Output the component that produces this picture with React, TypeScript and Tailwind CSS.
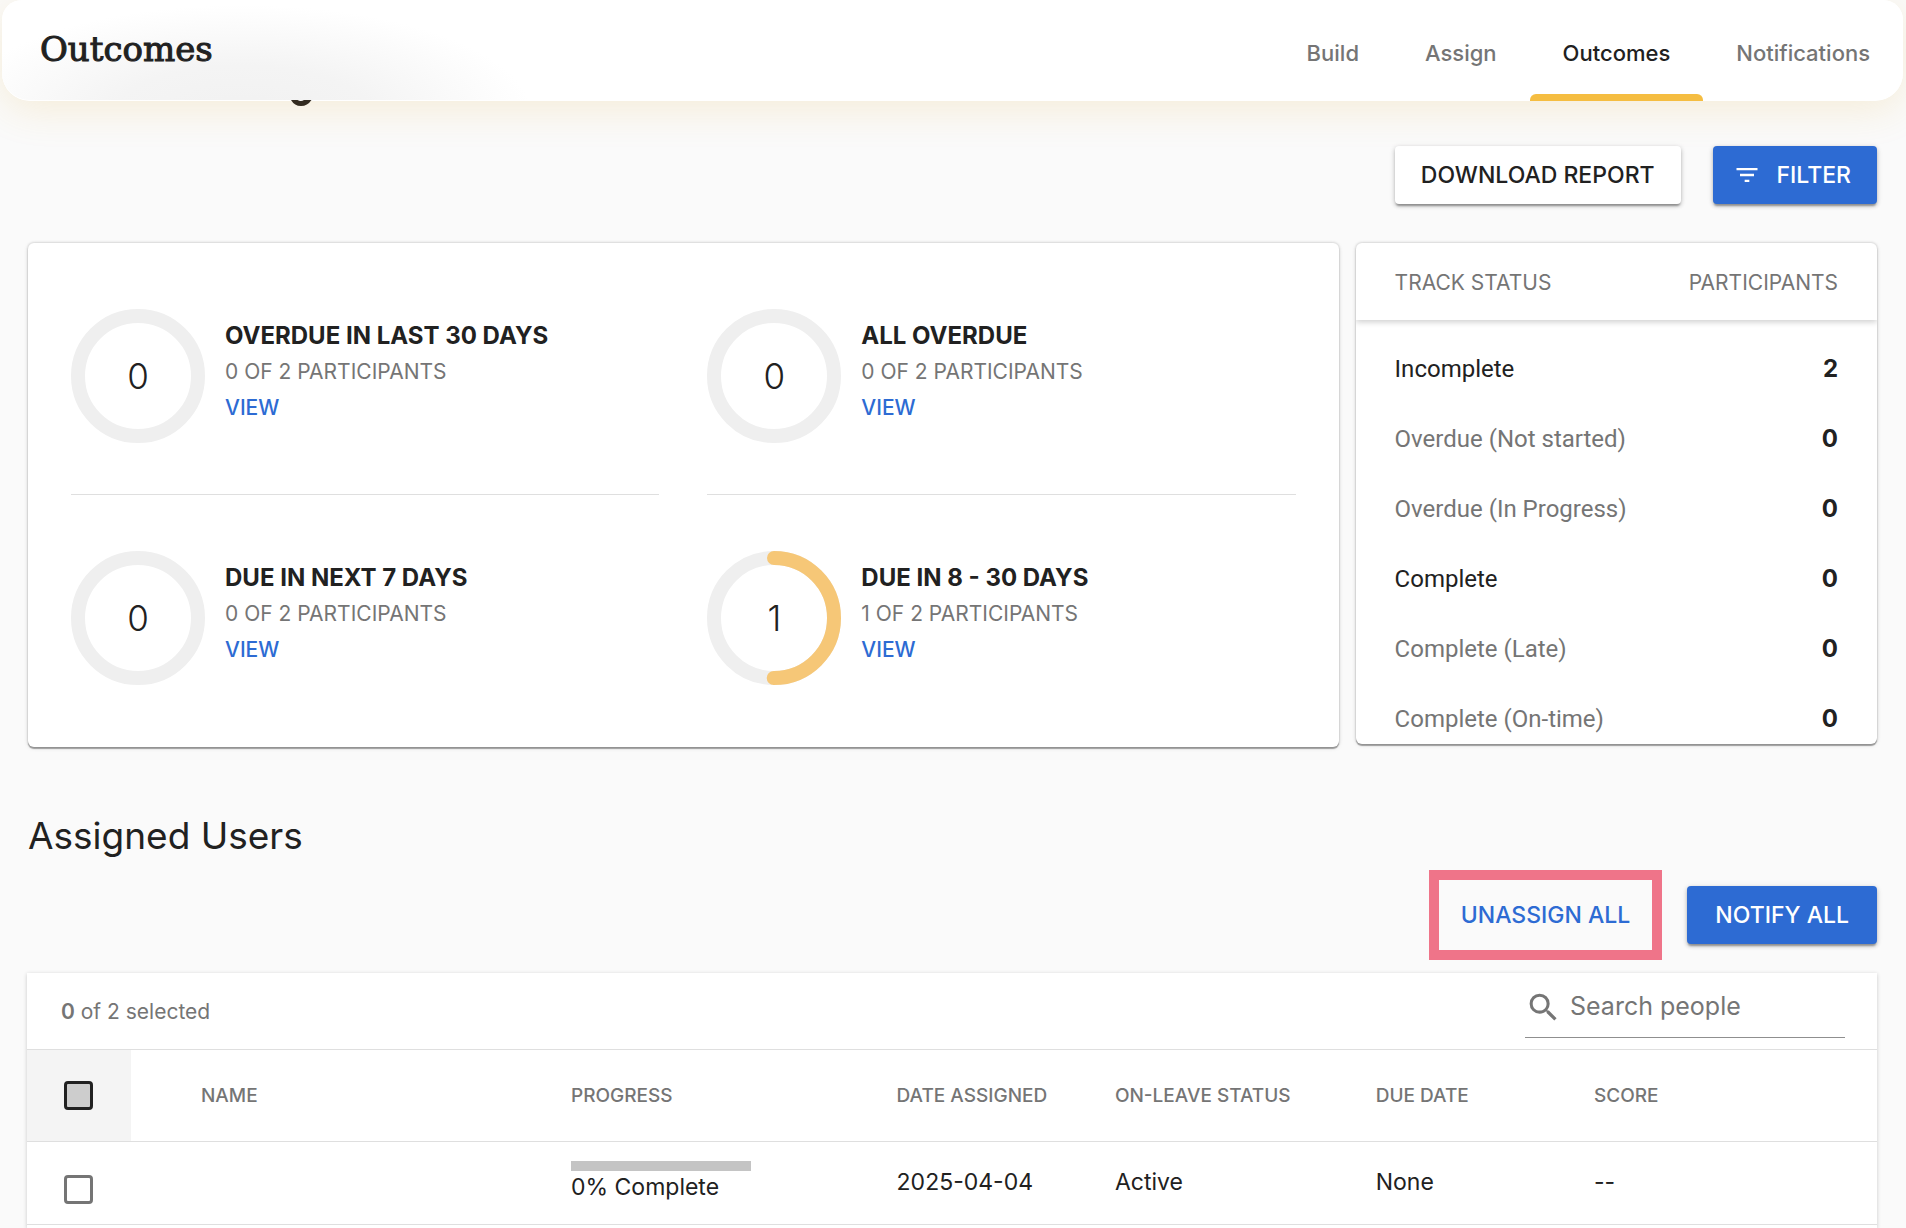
import { useState } from 'react'
import clsx from 'clsx'
import { MdFilterList, MdSearch } from 'react-icons/md'

const TABS = ['Build', 'Assign', 'Outcomes', 'Notifications']

const STATS = [
  { label: 'Overdue in last 30 days', count: 0 },
  { label: 'All overdue', count: 0 },
  { label: 'Due in next 7 days', count: 0 },
  { label: 'Due in 8 - 30 days', count: 1 },
]

const STATUSES = [
  { label: 'Incomplete', count: 2, main: true },
  { label: 'Overdue (Not started)', count: 0 },
  { label: 'Overdue (In Progress)', count: 0 },
  { label: 'Complete', count: 0, main: true },
  { label: 'Complete (Late)', count: 0 },
  { label: 'Complete (On-time)', count: 0 },
]

const COLUMNS = [
  { label: 'Name', width: 'w-[20%]' },
  { label: 'Progress', width: 'w-[17.6%]' },
  { label: 'Date assigned', width: 'w-[11.8%]' },
  { label: 'On-leave status', width: 'w-[14.1%]' },
  { label: 'Due date', width: 'w-[11.8%]' },
  { label: 'Score', width: '' },
]

const TOTAL = 2
const RADIUS = 60
const LENGTH = 2 * Math.PI * RADIUS

const cardClass = 'rounded-md bg-white shadow-[0_2px_1px_0_rgba(0,0,0,0.32),0_0_2px_1px_rgba(0,0,0,0.1),0_1px_5px_0_rgba(0,0,0,0.1)]'
const buttonShadow = 'shadow-[0_3px_2px_-1px_rgba(0,0,0,0.28),0_2px_4px_0_rgba(0,0,0,0.2),0_1px_6px_0_rgba(0,0,0,0.1)]'
const checkboxClass = 'block size-[29px] appearance-none rounded border-3'

function Ring({ count }: { count: number }) {
  return (
    <div className="relative size-[134px] shrink-0">
      <svg viewBox="0 0 134 134" className="size-full -rotate-90" fill="none" strokeWidth="14">
        <circle cx="67" cy="67" r={RADIUS} stroke="#efefef" />
        {count > 0 && (
          <circle
            cx="67"
            cy="67"
            r={RADIUS}
            stroke="#f6c777"
            strokeLinecap="round"
            strokeDasharray={`${(count / TOTAL) * LENGTH} ${LENGTH}`}
          />
        )}
      </svg>
      <span className="absolute inset-0 flex items-center justify-center text-[35px] font-light">{count}</span>
    </div>
  )
}

function Stat({ label, count, top }: { label: string; count: number; top: boolean }) {
  return (
    <div className={clsx('flex gap-5', top ? 'border-b border-[#dfdfdf] pt-[66px] pb-[51px]' : 'pt-14 pb-[62px]')}>
      <Ring count={count} />
      <div className="pt-[9px] text-[21px] leading-9 uppercase">
        <h3 className="text-2xl leading-9 font-bold">{label}</h3>
        <p className="text-[#757575]">{count} of {TOTAL} participants</p>
        <a href="#assigned" className="font-medium text-[#2d6bd3]">View</a>
      </div>
    </div>
  )
}

export default function App() {
  const [tab, setTab] = useState('Outcomes')

  return (
    <div className="flex min-h-screen flex-col bg-[#fafafa] font-['Inter',sans-serif] text-[#212121]">
      <header className="relative mr-[3px] ml-0.5 flex h-[101px] items-stretch justify-between rounded-[28px] rounded-t-[20px] border-b border-white bg-white bg-[radial-gradient(ellipse_290px_110px_at_240px_115px,#f1f1f1_0%,#f4f4f4_45%,#fafafa_75%,#ffffff_100%)] pl-[38px] shadow-[0_8px_40px_rgba(222,170,40,0.16)]">
        <h1 className="pt-[23px] font-['DejaVu_Serif',serif] text-[34px] leading-[52px] font-normal [-webkit-text-stroke:1px_#212121]">Outcomes</h1>
        <nav className="flex">
          {TABS.map((t) => (
            <button
              key={t}
              type="button"
              onClick={() => setTab(t)}
              className={clsx('relative px-[33px] pt-1.5 text-[22px] font-medium', t === tab ? 'text-[#212121]' : 'text-[#757575]')}
            >
              {t}
              {t === tab && <span className="absolute inset-x-0 -bottom-px h-[7px] rounded-t-md bg-[#f5bd41]" />}
            </button>
          ))}
        </nav>
        <svg className="absolute top-full left-[288px]" width="22" height="7" viewBox="0 0 22 7" fill="#332b20">
          <path d="M1 0H7.5Q10.8 1.8 14 0H21.5Q17.5 6 11 6Q4.500 6 1 0Z" />
        </svg>
      </header>

      <main className="flex flex-1 flex-col pr-[29px] pl-7">
        <div className="mt-[45px] flex justify-end gap-8">
          <button type="button" className={clsx('h-[58px] rounded bg-white px-[26px] text-[23px] font-medium', buttonShadow)}>
            DOWNLOAD REPORT
          </button>
          <button type="button" className={clsx('flex h-[58px] items-center gap-4 rounded bg-[#2d6bd3] pr-[26px] pl-5 text-[23px] font-medium text-white', buttonShadow)}>
            <MdFilterList size={28} />
            FILTER
          </button>
        </div>

        <div className="mt-[39px] flex items-start gap-[17px]">
          <section className={clsx('grid flex-1 grid-cols-2 gap-x-12 px-[43px]', cardClass)}>
            {STATS.map((s, i) => <Stat key={s.label} label={s.label} count={s.count} top={i < 2} />)}
          </section>

          <section className={clsx('h-[501px] w-[28.2%] overflow-hidden', cardClass)}>
            <table className="w-full border-separate border-spacing-0">
              <thead className="shadow-[0_2px_6px_rgba(0,0,0,0.2)]">
                <tr className="h-[77px] text-[21px] text-[#757575]">
                  <th className="pt-0.5 pl-[39px] text-left font-normal">TRACK STATUS</th>
                  <th className="pt-0.5 pr-[39px] text-right font-normal">PARTICIPANTS</th>
                </tr>
              </thead>
              <tbody>
                <tr className="h-3.5"><td colSpan={2} /></tr>
                {STATUSES.map((s) => (
                  <tr key={s.label} className="h-[70px] text-2xl">
                    <td className={clsx("pl-[39px] font-['Roboto',sans-serif]", !s.main && 'text-[#757575]')}>{s.label}</td>
                    <td className="pr-[39px] text-right font-bold">{s.count}</td>
                  </tr>
                ))}
              </tbody>
            </table>
          </section>
        </div>

        <h2 id="assigned" className="mt-16 text-[37px] leading-[50px]">Assigned Users</h2>

        <div className="mt-[9px] flex items-center justify-end gap-[25px]">
          <button type="button" className="h-[90px] border-10 border-[#ef7489] px-[22px] text-[23px] font-medium text-[#2d6bd3]">
            UNASSIGN ALL
          </button>
          <button type="button" className={clsx('h-[58px] rounded bg-[#2d6bd3] px-7 text-[23px] font-medium text-white', buttonShadow)}>
            NOTIFY ALL
          </button>
        </div>

        <section className="mt-[13px] -ml-px flex-1 bg-white shadow-[0_1px_4px_rgba(0,0,0,0.2)]">
          <div className="flex h-[77px] items-start justify-between border-b border-[#dfdfdf] pr-8 pl-[34px]">
            <p className="pt-[21px] text-[21px] leading-9 text-[#757575]"><b className="font-semibold">0</b> of 2 selected</p>
            <label className="flex h-[65px] w-80 items-center gap-2 border-b border-[#8f8f8f] pt-1 text-[#757575]">
              <MdSearch size={37} className="shrink-0" />
              <input type="search" aria-label="Search people" placeholder="Search people" className="w-full min-w-0 bg-transparent text-[25px] outline-none placeholder:text-[#757575]" />
            </label>
          </div>
          <table className="w-full table-fixed border-collapse text-left">
            <thead>
              <tr className="h-[91px] border-b border-[#dfdfdf] text-[19px] text-[#757575]">
                <th className="w-[104px] bg-[#f4f4f4] pl-[37px]">
                  <input type="checkbox" aria-label="Select all" className={clsx(checkboxClass, 'border-[#212121] bg-[#cdcdcd]')} />
                </th>
                <th className="w-[34px]" />
                {COLUMNS.map((c) => (
                  <th key={c.label} className={clsx('pt-0.5 pl-9 font-medium uppercase', c.width)}>{c.label}</th>
                ))}
              </tr>
            </thead>
            <tbody>
              <tr className="h-[83px] border-b border-[#dfdfdf] text-[23px]">
                <td className="pt-3.5 pl-[37px]">
                  <input type="checkbox" aria-label="Select user" className={clsx(checkboxClass, 'border-[#757575] bg-white')} />
                </td>
                <td />
                <td />
                <td className="pb-0.5 pl-9">
                  <div className="h-2.5 w-[180px] bg-[#c4c4c4]" />
                  <p className="leading-8">0% Complete</p>
                </td>
                <td className="pl-9">2025-04-04</td>
                <td className="pl-9">Active</td>
                <td className="pl-9">None</td>
                <td className="pl-9">--</td>
              </tr>
            </tbody>
          </table>
        </section>
      </main>
    </div>
  )
}
